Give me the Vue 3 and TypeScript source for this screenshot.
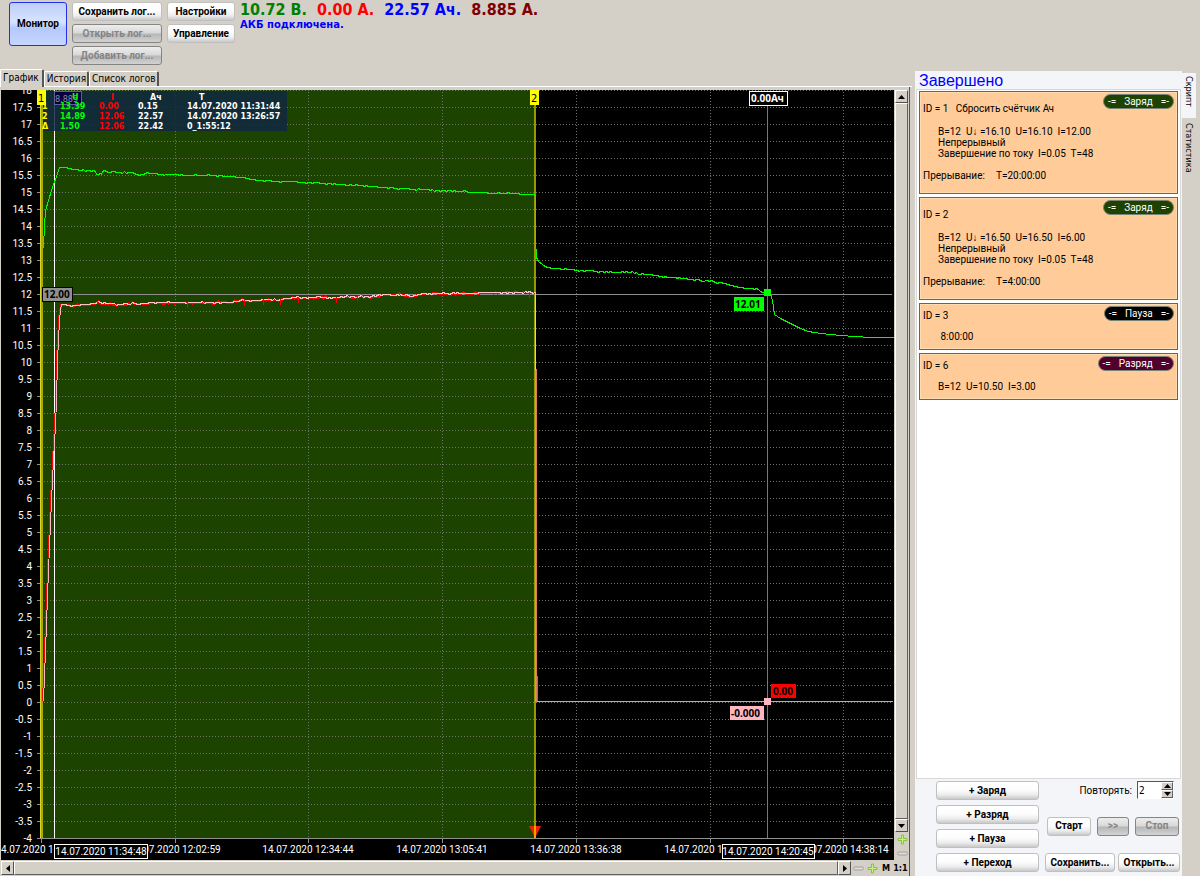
<script setup lang="ts">
import { ref } from 'vue'

interface Step {
  id: number
  note?: string
  kind: string
  tone: string
  tall: boolean
  lines: string[]
  stop?: string
}

const steps: Step[] = [
  { id: 1, note: 'Сбросить счётчик Ач', kind: 'Заряд', tone: 'charge', tall: true, lines: ['B=12  U↓ =16.10  U=16.10  I=12.00', 'Непрерывный', 'Завершение по току  I=0.05  T=48'], stop: 'T=20:00:00' },
  { id: 2, kind: 'Заряд', tone: 'charge', tall: true, lines: ['B=12  U↓ =16.50  U=16.50  I=6.00', 'Непрерывный', 'Завершение по току  I=0.05  T=48'], stop: 'T=4:00:00' },
  { id: 3, kind: 'Пауза', tone: 'pause', tall: false, lines: [' 8:00:00'] },
  { id: 6, kind: 'Разряд', tone: 'discharge', tall: false, lines: ['B=12  U=10.50  I=3.00'] },
]

const repeat = ref(2)

const yOf = (v: number): number => 702 - v * 34
const levels: number[] = Array.from({ length: 45 }, (_, i) => 18 - i * 0.5)
const columns: number[] = [175, 308, 442, 576, 710, 843]
const times: { x: number; text: string }[] = [
  { x: 41, text: '14.07.2020 11:31:14' },
  { x: 175, text: '14.07.2020 12:02:59' },
  { x: 308, text: '14.07.2020 12:34:44' },
  { x: 442, text: '14.07.2020 13:05:41' },
  { x: 576, text: '14.07.2020 13:36:38' },
  { x: 710, text: '14.07.2020 14:07:29' },
  { x: 843, text: '14.07.2020 14:38:14' },
]

const legend: { mark: string; u: string; i: string; q: string; t: string }[] = [
  { mark: '', u: 'U', i: 'I', q: 'Ач', t: 'T' },
  { mark: '1', u: '13.39', i: '0.00', q: '0.15', t: '14.07.2020 11:31:44' },
  { mark: '2', u: '14.89', i: '12.06', q: '22.57', t: '14.07.2020 13:26:57' },
  { mark: 'Δ', u: '1.50', i: '12.06', q: '22.42', t: '0_1:55:12' },
]
const legendY: number[] = [100, 109, 119, 129]

type Pt = [number, number]

const voltage: Pt[] = [
  [42, 247], [43, 247], [44, 225], [45, 210], [48, 200], [52, 187], [56, 176], [59, 167], [64, 167], [75, 169], [95, 171],
  [96, 174], [101, 174], [102, 171], [130, 172], [137, 174], [150, 173], [165, 174], [200, 175], [215, 175], [230, 176],
  [240, 177], [258, 180], [310, 182], [360, 185], [400, 188], [460, 191], [500, 193], [533, 194], [535, 195], [535, 240],
  [536, 257], [539, 262], [545, 266], [553, 268], [580, 270], [630, 272], [645, 274], [680, 278], [705, 280], [728, 284],
  [738, 287], [750, 288], [758, 289], [763, 292], [770, 293], [772, 300], [774, 314], [780, 318], [790, 323], [800, 328],
  [808, 331], [820, 333], [840, 335], [870, 337], [893, 337],
]
const current: Pt[] = [
  [60, 309], [61, 304], [75, 305], [95, 303], [98, 301], [102, 303], [120, 304], [135, 303], [160, 302], [200, 302],
  [230, 302], [240, 300], [280, 299], [295, 297], [335, 297], [345, 296], [375, 296], [385, 294], [400, 294], [412, 296],
  [423, 293], [534, 292],
]
const rise: Pt[] = [
  [42, 701], [44, 650], [47, 570], [50, 500], [52, 460], [54, 425], [55, 400], [56, 360], [58, 320], [59, 309],
]
const spikes: Pt[] = [
  [187, 302], [244, 300], [263, 299], [280, 299], [298, 297], [336, 297], [357, 295], [529, 292],
]

// Adds one-pixel measuring noise between the key points of a curve.
function trace(points: Pt[], from: number, to: number, seed: number): string {
  let s = seed
  const out: string[] = []
  points.forEach(([x, y], k) => {
    out.push(`${x},${y}`)
    const next = points[k + 1]
    if (!next || x < from || next[0] > to) return
    for (let px = x + 2; px < next[0]; px += 2) {
      s = (s * 1103515245 + 12345) % 2147483648
      const n = s / 2147483648
      const base = y + ((next[1] - y) * (px - x)) / (next[0] - x)
      out.push(`${px},${Math.round(base + (n > 0.8 ? 0.8 : n < 0.1 ? -0.8 : 0))}`)
    }
  })
  return out.join(' ')
}
const plain = (points: Pt[]): string => points.map((p) => p.join(',')).join(' ')

const voltageLine = trace(voltage, 64, 765, 7)
const currentLine = trace(current, 61, 534, 21)
const setLine = trace(current, 61, 534, 5)
const riseLine = plain(rise)
</script>

<template>
  <div class="app">
    <main class="left">
      <header class="toolbar">
        <button class="btn monitor" type="button">Монитор</button>
        <div class="stack logs">
          <button class="btn" type="button">Сохранить лог...</button>
          <button class="btn" type="button" disabled>Открыть лог...</button>
          <button class="btn" type="button" disabled>Добавить лог...</button>
        </div>
        <div class="stack setup">
          <button class="btn" type="button">Настройки</button>
          <button class="btn" type="button">Управление</button>
        </div>
        <div class="readout">
          <div class="values">
            <span class="v-volt">10.72 В.</span>
            <span class="v-amp">0.00 А.</span>
            <span class="v-cap">22.57 Ач.</span>
            <span class="v-peak">8.885 А.</span>
          </div>
          <div class="state">АКБ подключена.</div>
        </div>
      </header>

      <nav class="tabs">
        <button class="tab active" type="button">График</button>
        <button class="tab" type="button">История</button>
        <button class="tab" type="button">Список логов</button>
      </nav>

      <section class="frame">
        <svg class="chart" viewBox="1 90 893 770" preserveAspectRatio="xMinYMin meet">
          <rect x="41" y="90" width="494" height="748" fill="#1c4400" />
          <g shape-rendering="crispEdges">
            <line v-for="v in levels" :key="'h' + v" x1="44" x2="893" :y1="Math.floor(yOf(v)) + 0.5" :y2="Math.floor(yOf(v)) + 0.5" class="grid" />
            <line v-for="x in columns" :key="'v' + x" :x1="x + 0.5" :x2="x + 0.5" y1="92" y2="838" class="grid" />
            <line v-for="v in levels" :key="'t' + v" x1="37" x2="41" :y1="Math.floor(yOf(v)) + 0.5" :y2="Math.floor(yOf(v)) + 0.5" class="tick" />
            <line v-for="x in columns" :key="'b' + x" :x1="x + 0.5" :x2="x + 0.5" y1="838" y2="843" class="tick" />
            <line x1="41.5" x2="41.5" y1="838" y2="843" class="tick" />
            <line x1="37" x2="893" y1="838.5" y2="838.5" class="tick" />
            <line x1="41" x2="892" y1="294.5" y2="294.5" stroke="#8c8c8c" />
          </g>

          <g class="axis" text-anchor="end">
            <text v-for="v in levels" :key="'l' + v" x="32" :y="Math.floor(yOf(v)) + 4">{{ v }}</text>
          </g>
          <g class="axis" text-anchor="middle">
            <text v-for="t in times" :key="t.x" :x="t.x" y="853">{{ t.text }}</text>
          </g>

          <g shape-rendering="crispEdges" fill="none">
            <line x1="767.5" x2="767.5" y1="106" y2="838" stroke="#787878" />
            <rect x="40" y="90" width="3" height="748" fill="#a9a900" />
            <rect x="40" y="90" width="1" height="748" fill="#d6d62a" />
            <rect x="534" y="90" width="2" height="748" fill="#989800" />
            <rect x="54" y="90" width="1" height="748" fill="#ffffff" />
            <g transform="translate(0.5 0.5)">
              <polyline :points="voltageLine" stroke="#00ff00" />
              <polyline :points="riseLine" stroke="#ff0000" />
              <polyline :points="riseLine" stroke="#ffb6c1" transform="translate(1 0)" />
              <polyline :points="currentLine" stroke="#ff0000" stroke-width="2" />
              <polyline :points="setLine" stroke="#ffc0c8" />
            </g>
            <line v-for="s in spikes" :key="s[0]" :x1="s[0] + 0.5" :x2="s[0] + 0.5" :y1="s[1]" :y2="s[1] + 6" stroke="#ff0000" />
            <rect x="535" y="292" width="1" height="78" fill="#ffd050" />
            <rect x="535" y="370" width="1" height="332" fill="#ff9420" />
            <rect x="536" y="369" width="1" height="333" fill="#d88060" />
            <rect x="537" y="676" width="1" height="26" fill="#a07078" />
            <rect x="537" y="701" width="356" height="1" fill="#dc9ca6" />
          </g>
          <path d="M529 826h12l-6 12z" fill="#e62500" />
          <path d="M534 826h2v12h-2z" fill="#ff9a00" />

          <rect x="43" y="91" width="244" height="40" fill="#102642" fill-opacity="0.84" />
          <rect x="54.5" y="91.5" width="27" height="13" fill="#06003c" stroke="#6060a0" />
          <text x="55" y="102" class="ghost">8.885</text>

          <g class="legend">
            <template v-for="(row, r) in legend" :key="r">
              <text x="42" :y="legendY[r]" fill="#ffff00">{{ row.mark }}</text>
              <text :x="r ? 60 : 72" :y="legendY[r]" fill="#00ff00">{{ row.u }}</text>
              <text :x="r ? 99 : 111" :y="legendY[r]" fill="#ff0000">{{ row.i }}</text>
              <text :x="r ? 138 : 150" :y="legendY[r]" fill="#ffffff">{{ row.q }}</text>
              <text :x="r ? 187 : 199" :y="legendY[r]" fill="#ffffff">{{ row.t }}</text>
            </template>
          </g>

          <g class="flag">
            <rect x="37" y="90" width="9" height="15" fill="#ffff00" />
            <text x="38" y="102">1</text>
            <rect x="530" y="90" width="9" height="15" fill="#ffff00" />
            <text x="531" y="102">2</text>
          </g>

          <g class="tag">
            <rect x="42.5" y="287.5" width="30" height="14" fill="#909090" stroke="#000000" />
            <text x="44" y="298">12.00</text>
            <rect x="734" y="297" width="30" height="14" fill="#00ff00" />
            <text x="735" y="308">12.01</text>
            <rect x="764" y="289" width="7" height="7" fill="#00ff00" />
            <rect x="771" y="684" width="25" height="14" fill="#ff0000" />
            <text x="773" y="695">0.00</text>
            <rect x="730" y="706" width="34" height="14" fill="#ffb6c1" />
            <text x="731" y="717">-0.000</text>
            <rect x="764" y="698" width="7" height="7" fill="#ffb6c1" />
          </g>
          <g>
            <rect x="749.5" y="91.5" width="38" height="14" fill="#000000" stroke="#ffffff" />
            <text x="751" y="102" class="tag white">0.00Ач</text>
            <rect x="54.5" y="844.5" width="93" height="14" fill="#000000" stroke="#ffffff" />
            <text x="101" y="855" text-anchor="middle" class="axis">14.07.2020 11:34:48</text>
            <rect x="722.5" y="844.5" width="92" height="14" fill="#000000" stroke="#ffffff" />
            <text x="768" y="855" text-anchor="middle" class="axis">14.07.2020 14:20:45</text>
          </g>
        </svg>

        <div class="vbar">
          <button class="arrow" type="button" aria-label="Вверх"><svg viewBox="0 0 7 4"><path d="M0 4l3.500-4L7 4z" /></svg></button>
          <div class="thumb"></div>
          <button class="arrow" type="button" aria-label="Вниз"><svg viewBox="0 0 7 4"><path d="M0 0h7L3.500 4z" /></svg></button>
          <button class="zoom" type="button" aria-label="Увеличить по вертикали"><svg class="plus" viewBox="0 0 11 11"><path d="M4.500 1h2v3.500h3.500v2H6.500V10h-2V6.500H1v-2h3.500z" /></svg></button>
          <button class="zoom" type="button" aria-label="Уменьшить по вертикали"><svg class="minus" viewBox="0 0 11 11"><rect x="0.500" y="4" width="10" height="3" rx="1.500" /></svg></button>
        </div>

        <div class="hbar">
          <button class="arrow" type="button" aria-label="Влево"><svg class="side" viewBox="0 0 4 7"><path d="M4 0v7L0 3.500z" /></svg></button>
          <div class="thumb"></div>
          <button class="arrow" type="button" aria-label="Вправо"><svg class="side" viewBox="0 0 4 7"><path d="M0 0v7l4-3.500z" /></svg></button>
          <button class="zoom" type="button" aria-label="Уменьшить"><svg class="minus" viewBox="0 0 11 11"><rect x="0.500" y="4" width="10" height="3" rx="1.500" /></svg></button>
          <button class="zoom" type="button" aria-label="Увеличить"><svg class="plus" viewBox="0 0 11 11"><path d="M4.500 1h2v3.500h3.500v2H6.500V10h-2V6.500H1v-2h3.500z" /></svg></button>
          <button class="zoom" type="button">M</button>
          <button class="zoom wide" type="button">1:1</button>
        </div>
      </section>
    </main>

    <aside class="right">
      <div class="panel">
        <h1>Завершено</h1>
        <div class="list">
          <article v-for="s in steps" :key="s.id" class="card" :class="{ tall: s.tall }">
            <span class="badge" :class="s.tone"><i>-=</i>{{ s.kind }}<i>=-</i></span>
            <p class="id">ID = {{ s.id }}<template v-if="s.note">&nbsp;&nbsp; {{ s.note }}</template></p>
            <p v-for="l in s.lines" :key="l" class="line">{{ l }}</p>
            <p v-if="s.stop" class="stop"><span>Прерывание:</span>{{ s.stop }}</p>
          </article>
        </div>
        <div class="controls">
          <div class="adders">
            <button class="btn" type="button">+ Заряд</button>
            <button class="btn" type="button">+ Разряд</button>
            <button class="btn" type="button">+ Пауза</button>
            <button class="btn" type="button">+ Переход</button>
          </div>
          <div class="run">
            <div class="repeat">
              <label for="repeat">Повторять:</label>
              <div class="spin">
                <input id="repeat" v-model="repeat" type="number" />
                <div class="steps">
                  <button type="button" aria-label="Больше" @click="repeat++"><svg viewBox="0 0 7 4"><path d="M0 4l3.500-4L7 4z" /></svg></button>
                  <button type="button" aria-label="Меньше" @click="repeat--"><svg viewBox="0 0 7 4"><path d="M0 0h7L3.500 4z" /></svg></button>
                </div>
              </div>
            </div>
            <div class="row go">
              <button class="btn" type="button">Старт</button>
              <button class="btn next" type="button" disabled>&gt;&gt;</button>
              <button class="btn" type="button" disabled>Стоп</button>
            </div>
            <div class="row files">
              <button class="btn" type="button">Сохранить...</button>
              <button class="btn" type="button">Открыть...</button>
            </div>
          </div>
        </div>
      </div>
      <nav class="sidetabs">
        <button class="sidetab active" type="button">Скрипт</button>
        <button class="sidetab" type="button">Статистика</button>
      </nav>
    </aside>
  </div>
</template>

<style>
body {
  margin: 0;
  background: #d4d0c8;
}
</style>

<style scoped>
.app {
  display: grid;
  grid-template-columns: minmax(0, 1fr) 288px;
  min-height: 100vh;
  background: #d4d0c8;
  color: #000;
  font-family: "DejaVu Sans Condensed", "Noto Sans", sans-serif;
  font-size: 10px;
}
button {
  margin: 0;
  padding: 0;
  font: inherit;
  color: inherit;
  box-sizing: border-box;
}
.left {
  display: flex;
  flex-direction: column;
  min-width: 0;
}
.toolbar {
  display: flex;
  align-items: flex-start;
  height: 69px;
  padding: 2px 0 0 9px;
  box-sizing: border-box;
}
.btn {
  height: 19px;
  border: 1px solid #c0c0c0;
  border-radius: 3px;
  background: linear-gradient(#fff 0, #fdfdfd 45%, #ececec 75%, #c8c8c8 100%);
  font-family: Roboto, "Noto Sans", sans-serif;
  font-size: 10px;
  font-weight: 700;
  line-height: 16px;
  white-space: nowrap;
}
.btn:disabled {
  border-color: #858585;
  background: linear-gradient(#ededed 0, #d8d8d8 48%, #b6b6b6 52%, #d2d2d2 100%);
  color: #858585;
}
.monitor {
  width: 58px;
  height: 44px;
  border: 1px solid #2430e8;
  background: linear-gradient(#bccdf8 0, #d8e4ff 45%, #b4c8fc 60%, #c6d6ff 100%);
}
.stack {
  display: flex;
  flex-direction: column;
  gap: 3px;
}
.logs {
  width: 90px;
  margin-left: 5px;
}
.setup {
  width: 68px;
  margin-left: 5px;
}
.readout {
  margin-left: 5px;
  white-space: nowrap;
}
.values {
  display: flex;
  gap: 10px;
  font-size: 16px;
  font-weight: 700;
  line-height: 16px;
}
.v-volt { color: #008000; }
.v-amp { color: #ff0000; }
.v-cap { color: #0000ff; }
.v-peak { color: #800000; }
.state {
  color: #0000ff;
  font-family: "DejaVu Sans", sans-serif;
  font-size: 10px;
  font-weight: 700;
  line-height: 13px;
}
.tabs {
  display: flex;
  align-items: flex-end;
  height: 17px;
  border-bottom: 1px solid #fff;
}
.tab {
  height: 15px;
  padding: 0 1px 0 2px;
  border: 0;
  border-top: 1px solid #fff;
  border-left: 1px solid #fff;
  border-right: 2px solid #555;
  border-radius: 2px 2px 0 0;
  background: #d4d0c8;
  line-height: 14px;
}
.tab.active {
  height: 18px;
  margin-bottom: -1px;
  padding: 0 3px 1px 2px;
}
.frame {
  display: grid;
  grid-template-columns: minmax(0, 1fr) 14px;
  grid-template-rows: minmax(0, 1fr) 16px;
  flex: 1;
  min-height: 0;
  margin-right: 2px;
  padding: 3px 1px 0 1px;
  border-right: 1px solid #555;
  box-sizing: border-box;
}
.chart {
  display: block;
  width: 100%;
  height: 100%;
  background: #000;
}
.grid {
  stroke: #6c7468;
  stroke-dasharray: 1 2;
}
.tick { stroke: #909090; }
.axis {
  fill: #fff;
  font-size: 10px;
  font-family: Roboto, "Noto Sans", sans-serif;
}
.legend {
  font-family: "DejaVu Sans", sans-serif;
  font-size: 8px;
  font-weight: 700;
}
.ghost {
  fill: #8c8cb0;
  font-size: 9px;
}
.flag {
  fill: #000;
  font-size: 11px;
}
.tag {
  fill: #000;
  font-size: 10px;
  font-weight: 700;
  font-family: "Noto Sans", sans-serif;
}
.white { fill: #fff; }
.vbar {
  display: flex;
  flex-direction: column;
  padding-left: 1px;
}
.hbar {
  display: flex;
  grid-column: 1 / 3;
  padding-top: 1px;
}
.thumb {
  flex: 1;
  border: 1px solid;
  border-color: #fff #606060 #606060 #fff;
  background: #d4d0c8;
}
.hbar .thumb,
.hbar .arrow {
  height: 14px;
  box-sizing: border-box;
}
.arrow {
  display: flex;
  align-items: center;
  justify-content: center;
  flex: none;
  width: 13px;
  height: 13px;
  border: 1px solid;
  border-color: #fff #505050 #505050 #fff;
  background: #d4d0c8;
}
.arrow svg {
  width: 7px;
  height: 4px;
}
.arrow .side {
  width: 4px;
  height: 7px;
}
.zoom {
  display: flex;
  align-items: center;
  justify-content: center;
  width: 14px;
  height: 14px;
  border: 0;
  background: none;
  font-size: 9px;
  font-weight: 700;
}
.wide { width: 15px; }
.zoom svg {
  width: 11px;
  height: 11px;
}
.plus {
  fill: #c4f478;
  stroke: #88c048;
}
.minus {
  fill: #dcdcdc;
  stroke: #a0a0a0;
}
.right {
  display: flex;
  align-items: stretch;
  padding: 71px 4px 0 3px;
}
.panel {
  display: flex;
  flex-direction: column;
  flex: 1;
  min-width: 0;
  background: #f4f5f8;
}
h1 {
  margin: 0;
  padding: 1px 0 0 4px;
  color: #0000ff;
  font-family: "Liberation Sans", "Noto Sans", sans-serif;
  font-size: 16px;
  font-weight: 400;
  line-height: 17px;
}
.list {
  display: flex;
  flex-direction: column;
  flex: 1;
  gap: 3px;
  margin: 0 1px;
  padding: 1px 2px;
  border: 1px solid #d8d8d8;
  background: #fff;
}
.card {
  position: relative;
  padding: 6px 3px 7px;
  border: 1px solid #a85020;
  background: #ffcc99;
  box-shadow: inset 0 0 0 1px #ffdcb0;
}
.card.tall { padding: 11px 3px 12px; }
.card p {
  margin: 0;
  line-height: 11px;
  font-family: Roboto, "Noto Sans", sans-serif;
  font-size: 10px;
  white-space: pre;
}
.card .id { margin-bottom: 10px; }
.card.tall .id { margin-bottom: 12px; }
.card .line { padding-left: 15px; }
.card .stop { margin-top: 11px; }
.stop span {
  display: inline-block;
  width: 73px;
}
.badge {
  position: absolute;
  top: 2px;
  right: 3px;
  display: flex;
  gap: 8px;
  padding: 0 4px;
  border: 1px solid #7c8478;
  border-radius: 8px;
  color: #fff;
  font-family: Roboto, "Noto Sans", sans-serif;
  font-size: 10px;
  line-height: 13px;
}
.badge i { font-style: normal; }
.charge { background: #1c4400; }
.pause { background: #000; }
.discharge { background: #50002c; }
.controls {
  display: flex;
  gap: 6px;
  padding: 2px 2px 4px 21px;
}
.adders {
  display: flex;
  flex-direction: column;
  gap: 5px;
  width: 103px;
}
.run {
  display: flex;
  flex-direction: column;
  justify-content: space-between;
  flex: 1;
}
.repeat {
  display: flex;
  align-items: center;
  justify-content: flex-end;
  gap: 5px;
  padding-right: 6px;
}
.repeat label {
  font-family: Roboto, "Noto Sans", sans-serif;
}
.spin {
  display: flex;
  width: 37px;
  height: 18px;
  border: 1px solid;
  border-color: #555 #fff #fff #555;
  background: #fff;
  box-sizing: border-box;
}
.spin input {
  flex: 1;
  min-width: 0;
  padding: 0 1px;
  border: 0;
  background: none;
  font: inherit;
  font-size: 10px;
  appearance: textfield;
}
.spin input::-webkit-inner-spin-button { display: none; }
.steps {
  display: flex;
  flex-direction: column;
  width: 12px;
}
.steps button {
  display: flex;
  align-items: center;
  justify-content: center;
  flex: 1;
  border: 1px solid;
  border-color: #fff #606060 #606060 #fff;
  background: #d4d0c8;
}
.steps svg {
  flex: none;
  width: 7px;
  height: 4px;
}
.row {
  display: flex;
  gap: 6px;
}
.go { padding-left: 2px; }
.go .btn { width: 44px; }
.go .next { width: 32px; }
.files { gap: 3px; }
.files .btn { flex: 1 1 auto; }
.sidetabs {
  display: flex;
  flex-direction: column;
  width: 14px;
  padding-top: 2px;
}
.sidetab {
  height: 45px;
  padding: 3px 0;
  border: 0;
  background: none;
  font-size: 9px;
  line-height: 12px;
  text-align: left;
  writing-mode: vertical-rl;
}
.sidetab.active { background: #f4f5f8; }
.sidetab:last-child { height: 62px; padding-top: 5px; }
</style>
